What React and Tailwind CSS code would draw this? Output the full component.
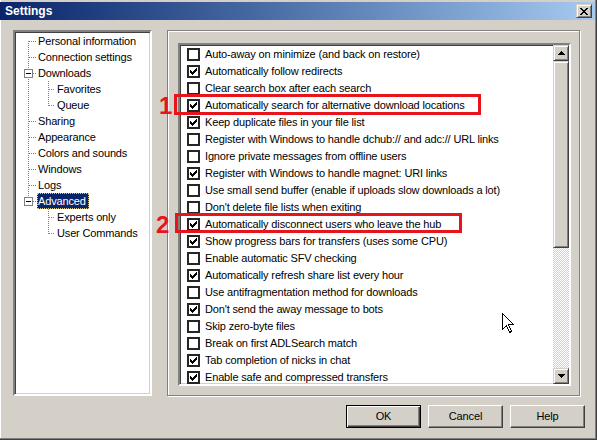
import React from "react";

const items = [
  ["Auto-away on minimize (and back on restore)", false],
  ["Automatically follow redirects", true],
  ["Clear search box after each search", false],
  ["Automatically search for alternative download locations", true],
  ["Keep duplicate files in your file list", true],
  ["Register with Windows to handle dchub:// and adc:// URL links", false],
  ["Ignore private messages from offline users", false],
  ["Register with Windows to handle magnet: URI links", true],
  ["Use small send buffer (enable if uploads slow downloads a lot)", false],
  ["Don't delete file lists when exiting", false],
  ["Automatically disconnect users who leave the hub", true],
  ["Show progress bars for transfers (uses some CPU)", true],
  ["Enable automatic SFV checking", false],
  ["Automatically refresh share list every hour", true],
  ["Use antifragmentation method for downloads", false],
  ["Don't send the away message to bots", true],
  ["Skip zero-byte files", false],
  ["Break on first ADLSearch match", false],
  ["Tab completion of nicks in chat", true],
  ["Enable safe and compressed transfers", true],
];

function Conn({ w, vx, v, stub = true, box = false }) {
  let y1 = 0,
    y2 = 16;
  if (v === "top") y2 = 9;
  if (v === "bottom") y1 = 8;
  return (
    <svg width={w} height={16} className="shrink-0" shapeRendering="crispEdges">
      {v && (
        <line
          x1={vx + 0.5}
          x2={vx + 0.5}
          y1={y1}
          y2={y2}
          stroke="#808080"
          strokeDasharray="1 1"
        />
      )}
      {stub && (
        <line
          x1={vx + 1}
          x2={w - 1}
          y1={8.5}
          y2={8.5}
          stroke="#808080"
          strokeDasharray="1 1"
        />
      )}
      {box && (
        <g>
          <rect x={vx - 4 + 0.5} y={4.5} width={8} height={8} fill="#fff" stroke="#808080" />
          <rect x={vx - 2} y={8} width={5} height={1} fill="#000" />
        </g>
      )}
    </svg>
  );
}

const tree = [
  { label: "Personal information", l0: { v: "bottom" } },
  { label: "Connection settings", l0: { v: "full" } },
  { label: "Downloads", l0: { v: "full", box: true } },
  { label: "Favorites", l0: { v: "full", stub: false }, l1: { v: "full" } },
  { label: "Queue", l0: { v: "full", stub: false }, l1: { v: "top" } },
  { label: "Sharing", l0: { v: "full" } },
  { label: "Appearance", l0: { v: "full" } },
  { label: "Colors and sounds", l0: { v: "full" } },
  { label: "Windows", l0: { v: "full" } },
  { label: "Logs", l0: { v: "full" } },
  { label: "Advanced", l0: { v: "top", box: true }, sel: true },
  { label: "Experts only", l0: { v: null, stub: false }, l1: { v: "full" } },
  { label: "User Commands", l0: { v: null, stub: false }, l1: { v: "top" } },
];

function Check({ on }) {
  return (
    <div className="w-[13px] h-[13px] shrink-0 border-2 border-[#262626] bg-white flex items-center justify-center">
      {on && (
        <svg width="7" height="7" shapeRendering="crispEdges">
          <rect x="0" y="2" width="1" height="3" fill="#000" />
          <rect x="1" y="3" width="1" height="3" fill="#000" />
          <rect x="2" y="4" width="1" height="3" fill="#000" />
          <rect x="3" y="3" width="1" height="3" fill="#000" />
          <rect x="4" y="2" width="1" height="3" fill="#000" />
          <rect x="5" y="1" width="1" height="3" fill="#000" />
          <rect x="6" y="0" width="1" height="3" fill="#000" />
        </svg>
      )}
    </div>
  );
}

function Arrow({ up }) {
  return (
    <svg width="7" height="4" shapeRendering="crispEdges">
      {up ? (
        <polygon points="3.5,0 7,4 0,4" fill="#000" />
      ) : (
        <polygon points="0,0 7,0 3.5,4" fill="#000" />
      )}
    </svg>
  );
}

const raised =
  "border border-t-[#d4d0c8] border-l-[#d4d0c8] border-r-[#404040] border-b-[#404040] shadow-[inset_1px_1px_0_#fff,inset_-1px_-1px_0_#808080] bg-[#d4d0c8]";
const sunken =
  "border-2 border-t-[#808080] border-l-[#808080] border-r-white border-b-white shadow-[inset_1px_1px_0_#404040,inset_-1px_-1px_0_#d4d0c8]";

export default function App() {
  return (
    <div className="relative w-[597px] h-[440px] bg-[#d4d0c8] overflow-hidden font-['Liberation_Sans',Arial,sans-serif] text-[11px] tracking-[-0.15px] text-black shadow-[inset_-1px_-1px_0_#404040,inset_-2px_-2px_0_#808080,inset_1px_0_0_#fff] flex flex-col">
      {/* title bar */}
      <div className="mt-[2px] mr-[2px] h-[18px] bg-linear-to-r from-[#0a246a] to-[#a6caf0] flex items-center justify-between pl-[5px] pr-[3px] shrink-0">
        <span className="text-white font-bold text-[12px] tracking-normal leading-none">Settings</span>
        <div className={"w-[16px] h-[14px] flex items-center justify-center " + raised}>
          <svg width="8" height="7" shapeRendering="crispEdges">
            <path
              d="M0 0h2v1h-2zM6 0h2v1h-2zM1 1h2v1h-2zM5 1h2v1h-2zM2 2h4v1h-4zM3 3h2v1h-2zM2 4h4v1h-4zM1 5h2v1h-2zM5 5h2v1h-2zM0 6h2v1h-2zM6 6h2v1h-2z"
              fill="#000"
            />
          </svg>
        </div>
      </div>

      {/* content */}
      <div className="flex mt-[10px] ml-[13px] h-[366px] gap-[15px]">
        {/* tree */}
        <div className={"w-[139px] h-full bg-white overflow-hidden " + sunken}>
          <div className="flex flex-col pt-[1px]">
            {tree.map((t) => (
              <div key={t.label} className="flex h-[16px] items-center">
                <Conn w={22} vx={13} {...t.l0} />
                {t.l1 && <Conn w={19} vx={11} {...t.l1} />}
                <span
                  className={
                    "px-[1px] h-[16px] leading-[16px] whitespace-nowrap " +
                    (t.sel
                      ? "bg-[#0a246a] text-white outline-1 outline-dotted outline-[#d4c890] -outline-offset-1 pr-[3px]"
                      : "")
                  }
                >
                  {t.label}
                </span>
              </div>
            ))}
          </div>
        </div>

        {/* frame */}
        <div className="w-[413px] h-full border border-[#808080] shadow-[inset_1px_1px_0_#fff,1px_1px_0_#fff] pl-[10px] pt-[12px]">
          <div className={"w-[393px] h-[343px] bg-white flex overflow-hidden " + sunken}>
            <div className="flex-1 flex flex-col pt-[1px] overflow-hidden">
              {items.map(([t, c]) => (
                <div key={t} className="flex h-[17px] shrink-0 items-center pl-[7px]">
                  <Check on={c} />
                  <span className="ml-[5px] whitespace-nowrap leading-none">{t}</span>
                </div>
              ))}
            </div>
            <div className="w-[16px] h-full flex flex-col shrink-0">
              <div className={"h-[16px] shrink-0 flex items-center justify-center " + raised}>
                <Arrow up />
              </div>
              <div className={"h-[187px] shrink-0 " + raised}></div>
              <div className="flex-1 bg-[image:repeating-conic-gradient(#fff_0_25%,#d4d0c8_0_50%)] bg-[length:2px_2px]"></div>
              <div className={"h-[16px] shrink-0 flex items-center justify-center " + raised}>
                <Arrow />
              </div>
            </div>
          </div>
        </div>
      </div>

      {/* buttons */}
      <div className="flex justify-end gap-[7px] mt-[9px] pr-[12px]">
        <button className="w-[75px] h-[23px] border border-black bg-[#d4d0c8] shadow-[inset_1px_1px_0_#fff,inset_-1px_-1px_0_#404040,inset_-2px_-2px_0_#808080] text-[11px]">
          OK
        </button>
        <button className="w-[75px] h-[23px] border border-t-white border-l-white border-r-[#404040] border-b-[#404040] bg-[#d4d0c8] shadow-[inset_-1px_-1px_0_#808080] text-[11px]">
          Cancel
        </button>
        <button className="w-[75px] h-[23px] border border-t-white border-l-white border-r-[#404040] border-b-[#404040] bg-[#d4d0c8] shadow-[inset_-1px_-1px_0_#808080] text-[11px]">
          Help
        </button>
      </div>

      {/* annotations */}
      <div className="absolute left-[174px] top-[94px] w-[307px] h-[21px] border-[3px] border-[#e8141c]"></div>
      <div className="absolute left-[175px] top-[213px] w-[287px] h-[20px] border-[3px] border-[#e8141c]"></div>
      <span className="absolute left-[159px] top-[94px] text-[24px] font-bold tracking-normal leading-none text-[#e8141c]">1</span>
      <span className="absolute left-[156px] top-[213px] text-[24px] font-bold tracking-normal leading-none text-[#e8141c]">2</span>

      {/* mouse cursor */}
      <svg className="absolute left-[502px] top-[313px]" width="13" height="21" shapeRendering="crispEdges">
        <polygon
          points="0.5,0.5 0.5,16.5 4.5,12.5 7.5,19.5 9.5,18.5 6.5,11.5 11.5,11.5"
          fill="#fff"
          stroke="#000"
          strokeWidth="1"
        />
      </svg>
    </div>
  );
}
